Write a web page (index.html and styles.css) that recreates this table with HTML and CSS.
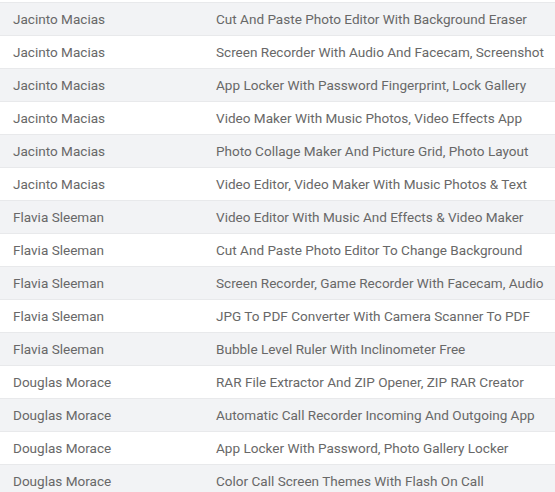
FILE: index.html
```html
<!DOCTYPE html>
<html>
<head>
<meta charset="utf-8">
<link rel="stylesheet" href="styles.css">
</head>
<body>
<table class="apps">
<tbody>
<tr><td class="dev">Jacinto Macias</td><td class="app">Cut And Paste Photo Editor With Background Eraser</td></tr>
<tr><td class="dev">Jacinto Macias</td><td class="app">Screen Recorder With Audio And Facecam, Screenshot</td></tr>
<tr><td class="dev">Jacinto Macias</td><td class="app">App Locker With Password Fingerprint, Lock Gallery</td></tr>
<tr><td class="dev">Jacinto Macias</td><td class="app">Video Maker With Music Photos, Video Effects App</td></tr>
<tr><td class="dev">Jacinto Macias</td><td class="app">Photo Collage Maker And Picture Grid, Photo Layout</td></tr>
<tr><td class="dev">Jacinto Macias</td><td class="app">Video Editor, Video Maker With Music Photos &amp; Text</td></tr>
<tr><td class="dev">Flavia Sleeman</td><td class="app">Video Editor With Music And Effects &amp; Video Maker</td></tr>
<tr><td class="dev">Flavia Sleeman</td><td class="app">Cut And Paste Photo Editor To Change Background</td></tr>
<tr><td class="dev">Flavia Sleeman</td><td class="app">Screen Recorder, Game Recorder With Facecam, Audio</td></tr>
<tr><td class="dev">Flavia Sleeman</td><td class="app">JPG To PDF Converter With Camera Scanner To PDF</td></tr>
<tr><td class="dev">Flavia Sleeman</td><td class="app">Bubble Level Ruler With Inclinometer Free</td></tr>
<tr><td class="dev">Douglas Morace</td><td class="app">RAR File Extractor And ZIP Opener, ZIP RAR Creator</td></tr>
<tr><td class="dev">Douglas Morace</td><td class="app">Automatic Call Recorder Incoming And Outgoing App</td></tr>
<tr><td class="dev">Douglas Morace</td><td class="app">App Locker With Password, Photo Gallery Locker</td></tr>
<tr><td class="dev">Douglas Morace</td><td class="app">Color Call Screen Themes With Flash On Call</td></tr>
</tbody>
</table>
</body>
</html>
```
FILE: styles.css
```css
html, body {
  margin: 0;
  padding: 0;
  background: #ffffff;
}
body {
  padding-top: 2px;
  font-family: Roboto, "Liberation Sans", sans-serif;
  font-size: 13.55px;
  color: #686868;
}
.apps {
  width: 555px;
  border-collapse: collapse;
  table-layout: fixed;
}
.apps tr {
  height: 33px;
  border-top: 1px solid #e8e9eb;
}
.apps tr:nth-child(odd) {
  background: #f2f3f5;
}
.apps td {
  padding: 0 12px 1px 13px;
  vertical-align: middle;
  white-space: nowrap;
  line-height: 20px;
}
.apps .dev {
  width: 178px;
}
```
